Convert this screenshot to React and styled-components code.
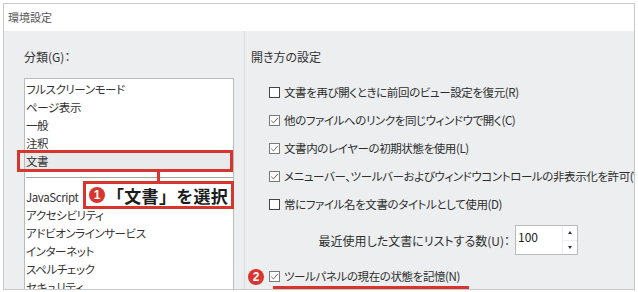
import React from "react";
import styled, { createGlobalStyle } from "styled-components";

const Global = createGlobalStyle`
  html, body { margin: 0; padding: 0; background: #ffffff; }
  body {
    font-family: "Noto Sans CJK JP", "Noto Sans", sans-serif;
    font-feature-settings: "palt";
    color: #2a2a2a;
  }
  * { box-sizing: border-box; }
`;

const RED = "#d8352f";

const Window = styled.div`
  margin: 3px 3px 0 3px;
  width: 632px;
  height: 287px;
  border: 1px solid #c6c8ca;
  display: flex;
  flex-direction: column;
  overflow: hidden;
  background: #eceef0;
`;

const TitleBar = styled.div`
  height: 27px;
  line-height: 26px;
  background: #ffffff;
  padding-left: 4px;
  font-size: 11px;
  color: #555;
  flex: none;
`;

const Body = styled.div`
  flex: 1;
  display: flex;
  min-height: 0;
`;

const LeftPane = styled.div`
  width: 240px;
  flex: none;
  padding: 18px 0 0 20px;
  display: flex;
  flex-direction: column;
`;

const Label = styled.div`
  font-size: 12px;
  line-height: 16px;
  height: 16px;
  margin-bottom: 13px;
  color: #333;
`;

const ListBox = styled.div`
  position: relative;
  width: 210px;
  flex: 1;
  background: #fff;
  border: 1px solid #b9bbbd;
  border-bottom: none;
  padding-top: 1px;
`;

const Item = styled.div`
  position: relative;
  height: 18px;
  line-height: 18px;
  padding-left: 1px;
  font-size: 11.5px;
  letter-spacing: -0.4px;
  color: #333;
  white-space: nowrap;
  background: ${(p) => (p.$selected ? "#e9eaeb" : "transparent")};
`;

const SelectFrame = styled.span`
  position: absolute;
  left: -8px;
  right: 0px;
  top: -2px;
  bottom: -2px;
  border: 3px solid ${RED};
`;

const Cut = styled.div`
  height: 18px;
  padding-top: 7px;
  &::after {
    content: "";
    display: block;
    margin-left: 1px;
    height: 1px;
    background: #a4a4a4;
  }
`;

const Connector = styled.span`
  position: absolute;
  left: 132px;
  top: 92px;
  width: 3px;
  height: 11px;
  background: ${RED};
`;

const Callout = styled.div`
  position: absolute;
  left: 58px;
  top: 102px;
  width: 151px;
  height: 28px;
  background: #fff;
  border: 3px solid ${RED};
  display: flex;
  align-items: center;
  gap: 2px;
  padding-left: 3px;
  font-size: 17px;
  font-weight: 700;
  font-feature-settings: normal;
  color: #1c1c1c;
  letter-spacing: 0.3px;
  white-space: nowrap;
`;

const Badge = styled.span`
  display: inline-flex;
  align-items: center;
  justify-content: center;
  width: ${(p) => p.$size || 15}px;
  height: ${(p) => p.$size || 15}px;
  border-radius: 50%;
  background: ${RED};
  color: #fff;
  font-family: "Liberation Sans", Arial, sans-serif;
  font-size: ${(p) => (p.$size ? p.$size - 4 : 11)}px;
  font-weight: 700;
  letter-spacing: 0;
  flex: none;
`;

const RightPane = styled.div`
  flex: 1;
  min-width: 0;
  border-left: 1px solid #d9dcde;
  padding: 18px 0 0 0;
  overflow: hidden;
`;

const SectionTitle = styled.div`
  font-size: 12px;
  line-height: 16px;
  height: 16px;
  padding-left: 6px;
  margin-bottom: 13px;
  color: #333;
`;

const Options = styled.div`
  padding-left: 24px;
  display: flex;
  flex-direction: column;
`;

const Row = styled.div`
  position: relative;
  height: 28px;
  display: flex;
  align-items: center;
  font-size: 11.5px;
  letter-spacing: -0.4px;
  color: #2e2e2e;
  white-space: nowrap;
`;

const Box = styled.span`
  width: 11px;
  height: 11px;
  flex: none;
  border: 1px solid ${(p) => (p.$checked ? "#7a7a7a" : "#444")};
  background: #fff;
  margin-right: 4px;
  display: inline-flex;
  align-items: center;
  justify-content: center;
`;

const RowBadge = styled.span`
  position: absolute;
  left: -21px;
  top: 6px;
`;

const Underline = styled.span`
  position: absolute;
  left: 4px;
  width: 196px;
  top: 24px;
  height: 3px;
  background: ${RED};
`;

const SpinRow = styled.div`
  height: 44px;
  display: flex;
  align-items: center;
  font-size: 12px;
  color: #2e2e2e;
  white-space: nowrap;
`;

const SpinLabel = styled.span`
  width: 241px;
  text-align: right;
  margin-right: 5px;
`;

const Spin = styled.div`
  width: 63px;
  height: 30px;
  border: 1px solid #b7b9bb;
  background: #fff;
  display: flex;
`;

const SpinValue = styled.div`
  flex: 1;
  padding: 4px 0 0 2px;
  font-size: 12px;
  line-height: 14px;
  color: #222;
`;

const SpinButtons = styled.div`
  width: 15px;
  display: flex;
  flex-direction: column;
  border-left: 1px solid #eceef0;
`;

const SpinBtn = styled.div`
  flex: 1;
  display: flex;
  align-items: center;
  justify-content: center;
  &::after {
    content: "";
    width: 0;
    height: 0;
    border-left: 2px solid transparent;
    border-right: 2px solid transparent;
    ${(p) =>
      p.$up
        ? "border-bottom: 3px solid #333;"
        : "border-top: 3px solid #333;"}
  }
  & + & {
    border-top: 1px solid #eceef0;
  }
`;

const Check = () => (
  <svg width="9" height="9" viewBox="0 0 9 9">
    <path d="M1.2 4.6 L3.5 6.9 L7.9 1.8" fill="none" stroke="#666" strokeWidth="1" />
  </svg>
);

const CheckRow = ({ checked, children, badge, underline }) => (
  <Row>
    {badge && (
      <RowBadge>
        <Badge $size={16}>{badge}</Badge>
      </RowBadge>
    )}
    <Box $checked={checked}>{checked && <Check />}</Box>
    {children}
    {underline && <Underline />}
  </Row>
);

const itemsTop = ["フルスクリーンモード", "ページ表示", "一般", "注釈"];
const itemsBottom = [
  "JavaScript",
  "アクセシビリティ",
  "アドビオンラインサービス",
  "インターネット",
  "スペルチェック",
  "セキュリティ",
];

export default function App() {
  return (
    <>
      <Global />
      <Window>
        <TitleBar>環境設定</TitleBar>
        <Body>
          <LeftPane>
            <Label>分類(G)：</Label>
            <ListBox>
              {itemsTop.map((t) => (
                <Item key={t}>{t}</Item>
              ))}
              <Item $selected>
                文書
                <SelectFrame />
              </Item>
              <Cut />
              {itemsBottom.map((t) => (
                <Item key={t}>{t}</Item>
              ))}
              <Connector />
              <Callout>
                <Badge $size={16}>1</Badge>
                <span>「文書」を選択</span>
              </Callout>
            </ListBox>
          </LeftPane>
          <RightPane>
            <SectionTitle>開き方の設定</SectionTitle>
            <Options>
              <CheckRow>文書を再び開くときに前回のビュー設定を復元(R)</CheckRow>
              <CheckRow checked>他のファイルへのリンクを同じウィンドウで開く(C)</CheckRow>
              <CheckRow checked>文書内のレイヤーの初期状態を使用(L)</CheckRow>
              <CheckRow checked>
                メニューバー、ツールバーおよびウィンドウコントロールの非表示化を許可(V)
              </CheckRow>
              <CheckRow>常にファイル名を文書のタイトルとして使用(D)</CheckRow>
              <SpinRow>
                <SpinLabel>最近使用した文書にリストする数(U)：</SpinLabel>
                <Spin>
                  <SpinValue>100</SpinValue>
                  <SpinButtons>
                    <SpinBtn $up />
                    <SpinBtn />
                  </SpinButtons>
                </Spin>
              </SpinRow>
              <CheckRow checked badge="2" underline>
                ツールパネルの現在の状態を記憶(N)
              </CheckRow>
            </Options>
          </RightPane>
        </Body>
      </Window>
    </>
  );
}
